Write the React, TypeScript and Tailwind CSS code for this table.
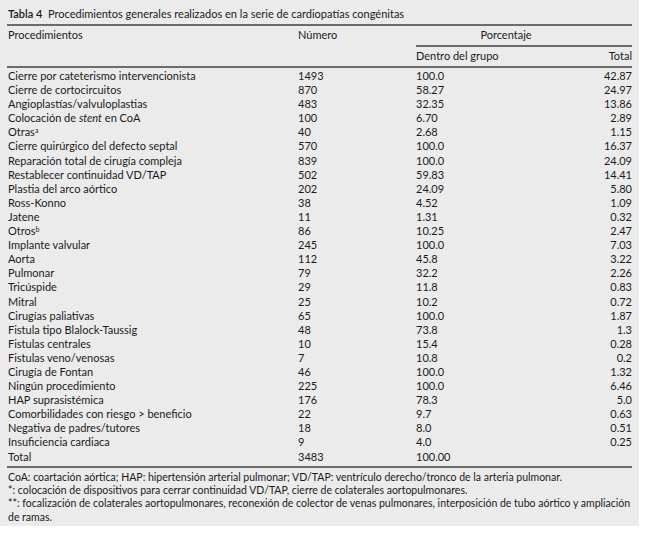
import React from "react";

type Row = {
  label: React.ReactNode;
  n: string;
  group: string;
  total: string;
};

const rows: Row[] = [
  { label: "Cierre por cateterismo intervencionista", n: "1493", group: "100.0", total: "42.87" },
  { label: "Cierre de cortocircuitos", n: "870", group: "58.27", total: "24.97" },
  { label: "Angioplastías/valvuloplastias", n: "483", group: "32.35", total: "13.86" },
  {
    label: (
      <>
        Colocación de <i>stent</i> en CoA
      </>
    ),
    n: "100",
    group: "6.70",
    total: "2.89",
  },
  {
    label: (
      <>
        Otras<sup className="text-[7px]">a</sup>
      </>
    ),
    n: "40",
    group: "2.68",
    total: "1.15",
  },
  { label: "Cierre quirúrgico del defecto septal", n: "570", group: "100.0", total: "16.37" },
  { label: "Reparación total de cirugía compleja", n: "839", group: "100.0", total: "24.09" },
  { label: "Restablecer continuidad VD/TAP", n: "502", group: "59.83", total: "14.41" },
  { label: "Plastia del arco aórtico", n: "202", group: "24.09", total: "5.80" },
  { label: "Ross-Konno", n: "38", group: "4.52", total: "1.09" },
  { label: "Jatene", n: "11", group: "1.31", total: "0.32" },
  {
    label: (
      <>
        Otros<sup className="text-[7px]">b</sup>
      </>
    ),
    n: "86",
    group: "10.25",
    total: "2.47",
  },
  { label: "Implante valvular", n: "245", group: "100.0", total: "7.03" },
  { label: "Aorta", n: "112", group: "45.8", total: "3.22" },
  { label: "Pulmonar", n: "79", group: "32.2", total: "2.26" },
  { label: "Tricúspide", n: "29", group: "11.8", total: "0.83" },
  { label: "Mitral", n: "25", group: "10.2", total: "0.72" },
  { label: "Cirugías paliativas", n: "65", group: "100.0", total: "1.87" },
  { label: "Fistula tipo Blalock-Taussig", n: "48", group: "73.8", total: "1.3" },
  { label: "Fistulas centrales", n: "10", group: "15.4", total: "0.28" },
  { label: "Fistulas veno/venosas", n: "7", group: "10.8", total: "0.2" },
  { label: "Cirugía de Fontan", n: "46", group: "100.0", total: "1.32" },
  { label: "Ningún procedimiento", n: "225", group: "100.0", total: "6.46" },
  { label: "HAP suprasistémica", n: "176", group: "78.3", total: "5.0" },
  { label: "Comorbilidades con riesgo > beneficio", n: "22", group: "9.7", total: "0.63" },
  { label: "Negativa de padres/tutores", n: "18", group: "8.0", total: "0.51" },
  { label: "Insuficiencia cardiaca", n: "9", group: "4.0", total: "0.25" },
  { label: "Total", n: "3483", group: "100.00", total: "" },
];

function Rule({ className = "" }: { className?: string }) {
  return <div className={`h-[2px] bg-[#6b6b6b] ${className}`} />;
}

export default function App() {
  return (
    <div className="min-h-screen bg-white">
      <div
        className="w-[639px] h-[526px] bg-[#ebebeb] px-[7px] text-[#1a1a1a] text-[11px]"
        style={{ fontFamily: "Lato, 'Liberation Sans', sans-serif" }}
      >
        {/* Title */}
        <div className="h-[24px] pt-[8px] pl-[1px] leading-[12px] flex">
          <span className="w-[40px] font-semibold">Tabla 4</span>
          <span>Procedimientos generales realizados en la serie de cardiopatías congénitas</span>
        </div>
        <Rule />

        {/* Header */}
        <div className="grid grid-cols-[290px_118px_1fr_60px] pl-[1px]">
          <div className="h-[19px] flex items-center">Procedimientos</div>
          <div className="h-[19px] flex items-center">Número</div>
          <div className="col-span-2 h-[19px] flex items-center justify-center pr-[36px]">Porcentaje</div>
          <div />
          <div />
          <div className="col-span-2">
            <Rule />
          </div>
          <div />
          <div />
          <div className="h-[19px] flex items-center">Dentro del grupo</div>
          <div className="h-[19px] flex items-center justify-end">Total</div>
        </div>
        <Rule />

        {/* Body */}
        <div className="pt-[1px] pl-[1px]">
          {rows.map((r, i) => (
            <div key={i} className="grid grid-cols-[290px_118px_1fr_60px] h-[14.1px] leading-[14.1px]">
              <div className="whitespace-nowrap">{r.label}</div>
              <div>{r.n}</div>
              <div>{r.group}</div>
              <div className="text-right">{r.total}</div>
            </div>
          ))}
        </div>
        <Rule className="mt-[2px]" />

        {/* Footnotes */}
        <div className="pt-[3px] pl-[1px] text-[10.5px] leading-[13.3px]">
          <p>CoA: coartación aórtica; HAP: hipertensión arterial pulmonar; VD/TAP: ventrículo derecho/tronco de la arteria pulmonar.</p>
          <p>*: colocación de dispositivos para cerrar continuidad VD/TAP, cierre de colaterales aortopulmonares.</p>
          <p>
            **: focalización de colaterales aortopulmonares, reconexión de colector de venas pulmonares, interposición de tubo aórtico y ampliación
            de ramas.
          </p>
        </div>
      </div>
    </div>
  );
}
